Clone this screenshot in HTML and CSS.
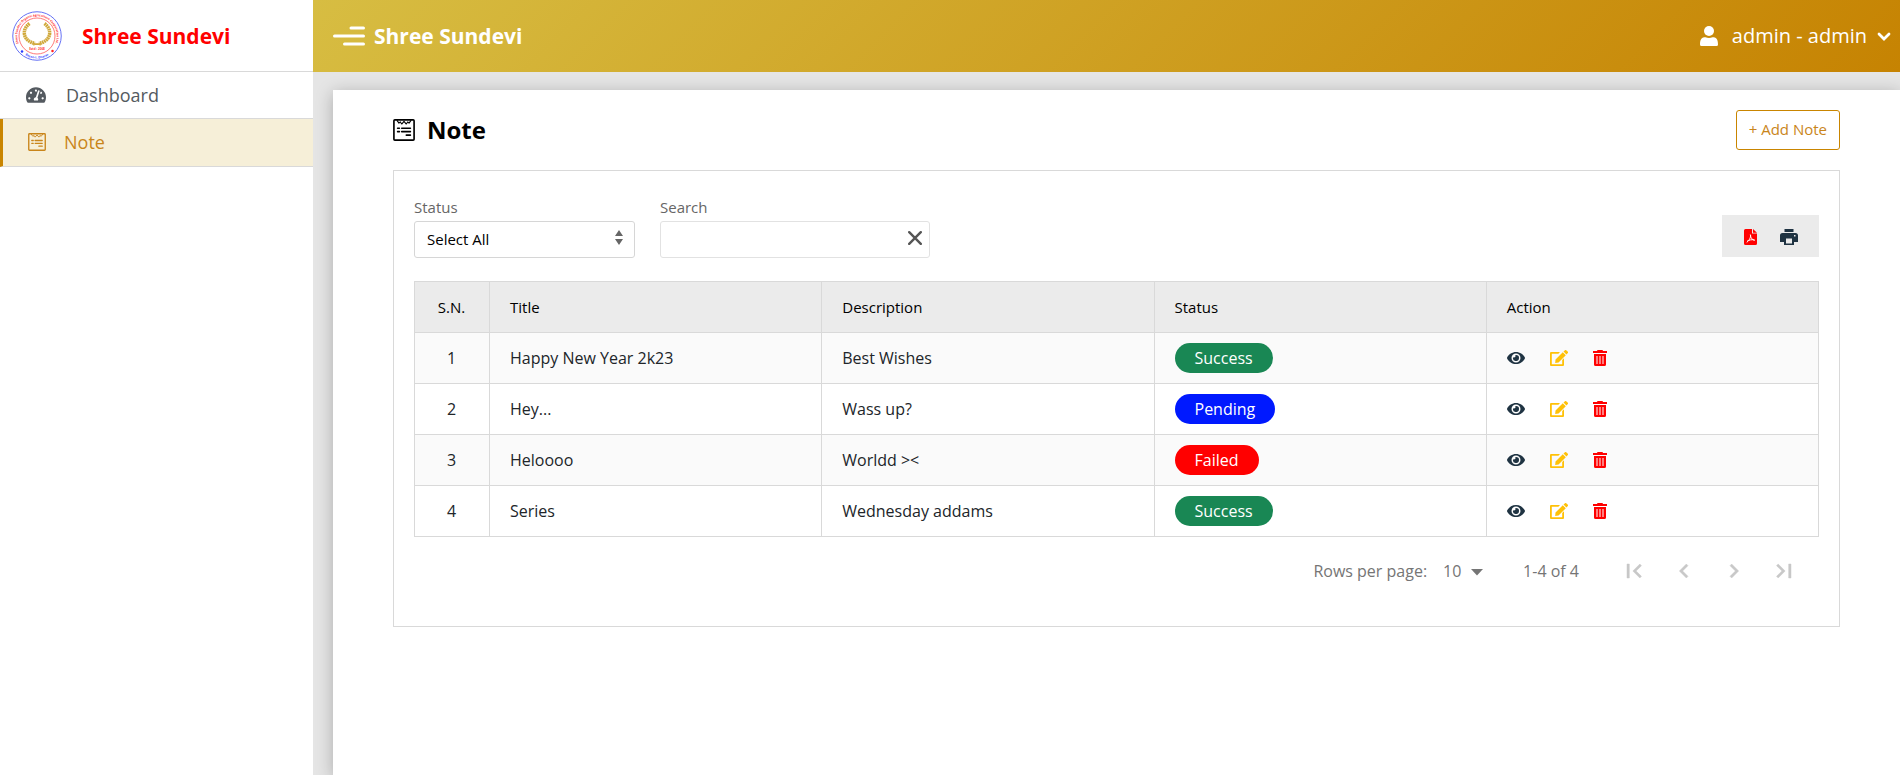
FILE: index.html
```html
<!DOCTYPE html>
<html lang="en">
<head>
<meta charset="utf-8">
<title>Shree Sundevi - Note</title>
<link rel="stylesheet" href="styles.css">
</head>
<body>
<svg class="sprite" aria-hidden="true">
  <symbol id="i-note" viewBox="0 0 24 24" fill="none" stroke="currentColor" stroke-linecap="round" stroke-linejoin="round">
    <rect x="1" y="1" width="22" height="22" rx="1" stroke-width="1.8"/>
    <path d="M4.500 1.800 6.500 4.500 8 3.200 9.500 5.500 12 2.500 14.500 5.500 16 3.200 17.500 4.500 19.500 1.800" stroke-width="1.200"/>
    <path d="M5 10h2M9.500 10h9.500M5 13.800h2M9.500 13.800h9.500M14.500 17.600h4.500" stroke-width="1.700"/>
  </symbol>
  <symbol id="i-eye" viewBox="0 0 576 512" fill="currentColor"><path d="M572.520 241.400C518.290 135.590 410.930 64 288 64S57.680 135.640 3.480 241.410a32.350 32.350 0 0 0 0 29.190C57.710 376.410 165.070 448 288 448s230.320-71.640 284.520-177.410a32.350 32.350 0 0 0 0-29.190zM288 400a144 144 0 1 1 144-144 143.930 143.930 0 0 1-144 144zm0-240a95.310 95.310 0 0 0-25.310 3.790 47.850 47.850 0 0 1-66.900 66.900A95.780 95.780 0 1 0 288 160z"/></symbol>
  <symbol id="i-edit" viewBox="0 0 18 16" fill="currentColor"><path d="M1 2h9L8.400 3.700H1.800v10.500h10.400V10l1.800-1.800V15a1 1 0 0 1-1 1H1a1 1 0 0 1-1-1V3a1 1 0 0 1 1-1z"/><path d="M5.200 12.900 5.500 9.600l7.300-7.300 3 3-7.300 7.300zM13.500 1.600 14.700.4a1.300 1.300 0 0 1 1.800 0l1.100 1.100a1.300 1.300 0 0 1 0 1.800l-1.200 1.200z"/></symbol>
  <symbol id="i-trash" viewBox="0 0 14 16" fill="currentColor"><path fill-rule="evenodd" d="M4.500 0h5l.5 1h4v2H0V1h4zM1 4h12v10.500a1.500 1.500 0 0 1-1.500 1.500h-9A1.500 1.500 0 0 1 1 14.500zM3.500 6v8h1V6zM6.500 6v8h1V6zM9.500 6v8h1V6z"/></symbol>
</svg>

<div class="app">
  <aside class="sidebar">
    <div class="brand">
      <svg class="brand-logo" viewBox="0 0 100 100" role="img" aria-label="Shree Sundevi logo">
        <defs>
          <path id="arc-top" d="M24.600 80.300A39.500 39.500 0 1 1 75.400 80.300"/>
          <path id="arc-bottom" d="M18 81.600A45 45 0 0 0 82 81.600"/>
        </defs>
        <circle cx="50" cy="50" r="48.500" fill="none" stroke="#6672f5" stroke-width="2"/>
        <circle cx="50" cy="50" r="36" fill="none" stroke="#ff4d4d" stroke-width="1.500"/>
        <text class="seal-red"><textPath href="#arc-top" startOffset="50%" text-anchor="middle">Shree Sundevi Organic Agriculture Cooperative Ltd.</textPath></text>
        <text class="seal-blue"><textPath href="#arc-bottom" startOffset="50%" text-anchor="middle">Bayan-1, Dharan</textPath></text>
        <circle cx="20" cy="81" r="2.500" fill="#2b3cff"/>
        <circle cx="81" cy="80" r="2.500" fill="#f22"/>
        <g fill="none" stroke="#d0a83a">
          <path d="M35 25C18 38 22 60 46 65M65 25C82 38 78 60 54 65" stroke-width="7" stroke-dasharray="3.500 1"/>
          <path d="M44 65l14 3M56 65l-14 3" stroke-width="2.500"/>
        </g>
        <text class="seal-year" x="50" y="78" text-anchor="middle">Estd : 2068</text>
      </svg>
      <span class="brand-name">Shree Sundevi</span>
    </div>
    <nav>
      <a class="nav-link" href="#">
        <svg class="nav-icon" viewBox="0 0 576 512"><path fill="currentColor" fill-rule="evenodd" d="M288 32C128.940 32 0 160.940 0 320c0 52.800 14.250 102.260 39.060 144.800 5.610 9.620 16.300 15.200 27.440 15.200h443c11.140 0 21.830-5.580 27.440-15.200C561.750 422.260 576 372.800 576 320c0-159.060-128.940-288-288-288zm0 64c14.710 0 26.580 10.130 30.320 23.650-1.110 2.260-2.640 4.230-3.450 6.670l-9.220 27.670c-5.130 3.490-10.970 6.010-17.640 6.010-17.670 0-32-14.330-32-32S270.330 96 288 96zM96 384c-17.670 0-32-14.330-32-32s14.330-32 32-32 32 14.330 32 32-14.330 32-32 32zm48-160c-17.670 0-32-14.330-32-32s14.330-32 32-32 32 14.330 32 32-14.330 32-32 32zm246.770-72.410l-61.330 184C343.130 347.330 352 364.540 352 384c0 11.720-3.380 22.550-8.880 32H232.880c-5.500-9.450-8.880-20.280-8.880-32 0-33.940 26.500-61.430 59.900-63.590l61.340-184.010c4.170-12.560 17.730-19.450 30.360-15.170 12.570 4.190 19.350 17.790 15.170 30.360zm14.660 57.200l15.520-46.550c3.470-1.290 7.130-2.230 11.050-2.230 17.670 0 32 14.330 32 32s-14.330 32-32 32c-11.380-.01-20.890-6.280-26.570-15.220zM480 384c-17.670 0-32-14.330-32-32s14.330-32 32-32 32 14.330 32 32-14.330 32-32 32z"/></svg>
        <span>Dashboard</span>
      </a>
      <a class="nav-link active" href="#" aria-current="page">
        <svg class="nav-icon"><use href="#i-note"/></svg>
        <span>Note</span>
      </a>
    </nav>
  </aside>

  <div class="page">
    <header class="topbar">
      <button class="menu-btn" type="button" aria-label="Toggle menu">
        <svg width="32" height="20" viewBox="0 0 32 20"><path d="M18 2h12.500M1.500 10h29M11.500 18h19" stroke="#fff" stroke-width="3" stroke-linecap="round"/></svg>
      </button>
      <span class="topbar-title">Shree Sundevi</span>
      <button class="user-btn" type="button">
        <svg width="18" height="20" viewBox="0 0 18 20" fill="#fff"><circle cx="9" cy="5" r="5"/><path d="M0 18.500C0 13 2 11.200 5.500 11.200c2 1 5 1 7 0C16 11.200 18 13 18 18.500a1.500 1.500 0 0 1-1.500 1.500h-15A1.500 1.500 0 0 1 0 18.500z"/></svg>
        <span>admin - admin</span>
        <svg width="14" height="9" viewBox="0 0 14 9"><path d="M2 2l5 5 5-5" fill="none" stroke="#fff" stroke-width="2.800" stroke-linecap="round"/></svg>
      </button>
    </header>

    <main class="content">
      <div class="title-row">
        <h1><svg class="title-icon"><use href="#i-note"/></svg>Note</h1>
        <button class="add-btn" type="button">+ Add Note</button>
      </div>

      <section class="panel">
        <div class="filters">
          <div class="field field-status">
            <label for="status">Status</label>
            <div class="control">
              <select id="status"><option>Select All</option><option>Success</option><option>Pending</option><option>Failed</option></select>
              <svg class="select-arrows" viewBox="0 0 8 15"><path d="M0 6 4 0l4 6zM0 9h8l-4 6z" fill="#666"/></svg>
            </div>
          </div>
          <div class="field field-search">
            <label for="search">Search</label>
            <div class="control">
              <input id="search" type="text">
              <button class="clear-btn" type="button" aria-label="Clear search"><svg width="14" height="14" viewBox="0 0 14 14"><path d="M1.200 1.200l11.600 11.600M12.800 1.200 1.200 12.800" stroke="#555" stroke-width="2.400" stroke-linecap="round"/></svg></button>
            </div>
          </div>
          <div class="exports">
            <button type="button" aria-label="Export PDF"><svg width="13" height="16" viewBox="0 0 13 16"><path fill="red" d="M1.500 0H8v4.500h5v10a1.500 1.500 0 0 1-1.500 1.500h-10A1.500 1.500 0 0 1 0 14.500v-13A1.500 1.500 0 0 1 1.500 0z"/><path fill="red" d="M9 0l4 3.700H9z"/><path d="M6.300 5.500c.9 2-.6 5.500-3.600 8M6.500 6c-.2 3 2 5 4.300 5.300M3 12.300c2-1.400 5-2 7.500-1.300" fill="none" stroke="#fff" stroke-width="1"/></svg></button>
            <button type="button" aria-label="Print"><svg width="18" height="16" viewBox="0 0 18 16"><path fill="#1f3342" fill-rule="evenodd" d="M4.500 0h9v3h-9zM2.500 4h13A2.500 2.500 0 0 1 18 6.500V13h-4v3H4v-3H0V6.500A2.500 2.500 0 0 1 2.500 4zM6 9.500v5h6v-5zM14 6v1.500h1.500V6z"/></svg></button>
          </div>
        </div>

        <table>
          <thead><tr><th class="col-sn">S.N.</th><th>Title</th><th>Description</th><th>Status</th><th>Action</th></tr></thead>
          <tbody>
            <tr><td class="col-sn">1</td><td>Happy New Year 2k23</td><td>Best Wishes</td><td><span class="badge success">Success</span></td>
              <td><div class="actions"><button type="button" class="view" aria-label="View"><svg><use href="#i-eye"/></svg></button><button type="button" class="edit" aria-label="Edit"><svg><use href="#i-edit"/></svg></button><button type="button" class="delete" aria-label="Delete"><svg><use href="#i-trash"/></svg></button></div></td></tr>
            <tr><td class="col-sn">2</td><td>Hey...</td><td>Wass up?</td><td><span class="badge pending">Pending</span></td>
              <td><div class="actions"><button type="button" class="view" aria-label="View"><svg><use href="#i-eye"/></svg></button><button type="button" class="edit" aria-label="Edit"><svg><use href="#i-edit"/></svg></button><button type="button" class="delete" aria-label="Delete"><svg><use href="#i-trash"/></svg></button></div></td></tr>
            <tr><td class="col-sn">3</td><td>Heloooo</td><td>Worldd &gt;&lt;</td><td><span class="badge failed">Failed</span></td>
              <td><div class="actions"><button type="button" class="view" aria-label="View"><svg><use href="#i-eye"/></svg></button><button type="button" class="edit" aria-label="Edit"><svg><use href="#i-edit"/></svg></button><button type="button" class="delete" aria-label="Delete"><svg><use href="#i-trash"/></svg></button></div></td></tr>
            <tr><td class="col-sn">4</td><td>Series</td><td>Wednesday addams</td><td><span class="badge success">Success</span></td>
              <td><div class="actions"><button type="button" class="view" aria-label="View"><svg><use href="#i-eye"/></svg></button><button type="button" class="edit" aria-label="Edit"><svg><use href="#i-edit"/></svg></button><button type="button" class="delete" aria-label="Delete"><svg><use href="#i-trash"/></svg></button></div></td></tr>
          </tbody>
        </table>

        <div class="pagination">
          <label for="rows">Rows per page:</label>
          <div class="control rows-control">
            <select id="rows"><option>10</option><option>25</option><option>50</option></select>
            <svg class="rows-caret" viewBox="0 0 12 7"><path d="M0 0h12L6 6.500z" fill="#757575"/></svg>
          </div>
          <span class="range">1-4 of 4</span>
          <div class="pager">
            <button type="button" disabled aria-label="First page"><svg viewBox="0 0 24 24"><path d="M18.410 16.590 13.820 12l4.590-4.590L17 6l-6 6 6 6zM6 6h2v12H6z"/></svg></button>
            <button type="button" disabled aria-label="Previous page"><svg viewBox="0 0 24 24"><path d="M15.410 7.410 14 6l-6 6 6 6 1.410-1.410L10.830 12z"/></svg></button>
            <button type="button" disabled aria-label="Next page"><svg viewBox="0 0 24 24"><path d="M10 6 8.590 7.410 13.170 12l-4.580 4.590L10 18l6-6z"/></svg></button>
            <button type="button" disabled aria-label="Last page"><svg viewBox="0 0 24 24"><path d="M5.590 7.410 10.180 12l-4.590 4.590L7 18l6-6-6-6zM16 6h2v12h-2z"/></svg></button>
          </div>
        </div>
      </section>
    </main>
  </div>
</div>
</body>
</html>
```
FILE: styles.css
```css
* { box-sizing: border-box; }

body {
  margin: 0;
  font-family: "Open Sans", "Noto Sans", sans-serif;
  font-size: 16px;
  line-height: 24px;
  color: #212529;
  background: #fff;
}

button, select, input { font: inherit; color: inherit; }
button { padding: 0; border: 0; background: none; cursor: pointer; }
svg { display: block; flex: none; }
.sprite { position: absolute; width: 0; height: 0; }

.app { display: flex; min-height: 100vh; }

/* Sidebar */
.sidebar { flex: none; width: 313px; background: #fff; }
.brand {
  display: flex;
  align-items: center;
  gap: 20px;
  height: 72px;
  padding-left: 12px;
  border-bottom: 1px solid #d9d9d9;
}
.brand-logo { width: 50px; height: 52px; }
.brand-name { font-size: 21px; font-weight: 700; color: red; }
.seal-red { font-size: 6px; font-weight: 700; fill: #ff2a2a; }
.seal-blue { font-size: 6px; font-weight: 700; fill: #3344ff; }
.seal-year { font-size: 6px; font-weight: 700; fill: #ff4040; }

.nav-link {
  display: flex;
  align-items: center;
  gap: 20px;
  height: 47px;
  padding-left: 26px;
  border-bottom: 1px solid #d9d9d9;
  font-size: 18px;
  color: #545a60;
  text-decoration: none;
}
.nav-icon { width: 20px; height: 18px; }
.nav-link.active {
  height: 48px;
  padding: 0 0 2px 24px;
  border-left: 3px solid #c98500;
  background: #f6efd8;
  color: #c9851a;
  gap: 17px;
}

/* Top bar */
.page { flex: 1; min-width: 0; display: flex; flex-direction: column; background: #e5e5e5; }
.topbar {
  display: flex;
  align-items: center;
  height: 72px;
  padding: 0 9px 0 20px;
  background: linear-gradient(135deg, #d7bd42, #c68302);
  color: #fff;
  font-size: 21px;
}
.topbar-title { margin-left: 9px; font-weight: 700; }
.user-btn { display: flex; align-items: center; margin-left: auto; font-size: 20px; }
.user-btn span { margin: 0 10px 0 14px; }

/* Content */
.content {
  flex: 1;
  margin: 18px 0 0 20px;
  padding: 20px 60px;
  background: #fff;
  box-shadow: 0 3px 16px rgba(0, 0, 0, 0.25);
  clip-path: inset(-18px 0 0 -20px);
}
.title-row { display: flex; justify-content: space-between; height: 60px; }
h1 {
  display: flex;
  align-items: center;
  gap: 12px;
  height: 40px;
  margin: 0;
  font-size: 24px;
  font-weight: 700;
  color: #000;
}
.title-icon { width: 22px; height: 24px; }
.add-btn {
  height: 40px;
  padding: 0 12px 2px;
  border: 1px solid #c98500;
  border-radius: 3px;
  font-size: 15px;
  color: #c9851a;
}

.panel { padding: 24px 20px 27px; border: 1px solid #d9d9d9; }
.filters { display: flex; align-items: flex-end; gap: 25px; margin-bottom: 23px; }
.field { font-size: 15px; }
.field-status { width: 221px; }
.field-search { width: 270px; }
.field label { display: block; height: 26px; color: #666; }
.control { position: relative; }
.control select { appearance: none; background: #fff; outline: 0; }
.field select, .field input {
  display: block;
  width: 100%;
  height: 37px;
  padding: 0 12px 2px;
  border: 1px solid #d6d6d6;
  border-radius: 3px;
  color: #000;
}
.field input { border-color: #e2e2e2; }
.select-arrows { position: absolute; right: 12px; top: 9px; width: 8px; height: 15px; pointer-events: none; }
.clear-btn { position: absolute; right: 8px; top: 10px; }
.exports {
  display: flex;
  align-items: center;
  justify-content: center;
  gap: 23px;
  width: 97px;
  height: 42px;
  margin: 0 0 1px auto;
  padding-top: 2px;
  background: #ebebeb;
}

/* Table */
table { width: 100%; table-layout: fixed; border-collapse: collapse; }
th, td { height: 51px; padding: 0 20px; border: 1px solid #d9d9d9; text-align: left; }
th { background: #ebebeb; font-size: 15px; font-weight: 400; color: #000; }
.col-sn { width: 75px; padding: 0 1px 0 0; text-align: center; }
tbody tr:nth-child(odd) { background: #fafafa; }
.badge {
  display: inline-block;
  height: 30px;
  padding: 0 20px;
  border-radius: 15px;
  line-height: 30px;
  vertical-align: middle;
  color: #fff;
}
.success { background: #198754; }
.pending { background: #0019ff; }
.failed { background: red; }
.actions { display: flex; gap: 25px; }
.actions svg { width: 18px; height: 16px; }
.actions .delete svg { width: 14px; }
.view { color: #1f3342; }
.edit { color: #ffc107; }
.delete { color: red; }

/* Pagination */
.pagination { display: flex; align-items: center; height: 56px; margin-top: 6px; justify-content: flex-end; color: #757575; }
.rows-control { margin: 0 40px 0 16px; }
.rows-control select { display: block; width: 40px; height: 24px; padding: 0; border: 0; }
.rows-caret { position: absolute; right: 0; top: 10px; width: 12px; height: 7px; pointer-events: none; }
.pager { display: flex; gap: 10px; margin: 0 15px 0 35px; }
.pager button { display: grid; place-items: center; width: 40px; height: 40px; }
.pager svg { width: 28px; height: 28px; fill: #c8c8c8; stroke: #c8c8c8; stroke-width: 0.4; }
```
